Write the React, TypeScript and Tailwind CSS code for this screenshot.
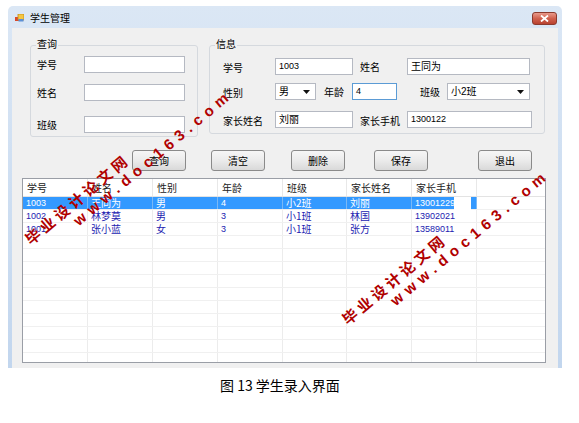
import React from "react";

const cjk = "font-['Noto_Sans_CJK_SC',sans-serif]";
const num = "font-['Liberation_Sans','Noto_Sans_CJK_SC',sans-serif]";

function TextBox({ className, value, focus }: { className: string; value?: string; focus?: boolean }) {
  const digits = value !== undefined && /^\d+$/.test(value);
  return (
    <div
      className={`${className} h-[17px] bg-white border ${
        focus ? "border-[#5b9bd5]" : "border-[#b5b9c2]"
      } flex items-center pl-[3px] ${digits ? "text-[9px]" : "text-[10px]"} leading-none text-black ${num}`}
    >
      {value}
    </div>
  );
}

function Combo({ className, value }: { className: string; value: string }) {
  return (
    <div className={`${className} h-[17px] bg-white border border-[#b5b9c2] flex items-center pl-[3px] pr-[5px] text-[10px] leading-none ${num}`}>
      <span className="flex-1">{value}</span>
      <svg width="7" height="4" viewBox="0 0 7 4">
        <path d="M0 0h7L3.5 4z" fill="#111" />
      </svg>
    </div>
  );
}

function Label({ className, children }: { className: string; children: React.ReactNode }) {
  return <span className={`${className} text-[10px] leading-none text-black ${cjk}`}>{children}</span>;
}

function Btn({ className, children }: { className: string; children: React.ReactNode }) {
  return (
    <div
      className={`${className} w-[54px] h-[21px] rounded-[3px] border border-[#8a8a8a] bg-gradient-to-b from-[#f6f6f6] via-[#ebebeb] to-[#d9d9d9] flex items-center justify-center text-[10px] leading-none ${cjk}`}
    >
      {children}
    </div>
  );
}

const cols = ["w-[65px]", "w-[65px]", "w-[65px]", "w-[65px]", "w-[64px]", "w-[65px]", "w-[65px]"];
const header = ["学号", "姓名", "性别", "年龄", "班级", "家长姓名", "家长手机"];
const rows = [
  ["1003", "王同为", "男", "4", "小2班", "刘丽", "13001229"],
  ["1002", "林梦莫", "男", "3", "小1班", "林国", "13902021"],
  ["1001", "张小蓝", "女", "3", "小1班", "张方", "13589011"],
];

function Watermark({ className }: { className: string }) {
  return (
    <div className={`absolute ${className} origin-top-left rotate-[-40deg] pointer-events-none text-[#b00000] font-bold`}>
      <div className={`h-[16px] leading-[16px] text-[15px] tracking-[3.7px] whitespace-nowrap ${cjk}`}>毕业设计论文网</div>
      <div className={`ml-[49px] mt-[1px] h-[16px] leading-[16px] text-[15px] tracking-[5.5px] whitespace-nowrap font-['Liberation_Sans',sans-serif]`}>
        www.doc163.com
      </div>
    </div>
  );
}

export default function App() {
  return (
    <div className="w-[579px] h-[423px] bg-white relative overflow-hidden">
      {/* Window */}
      <div className="ml-[8px] mt-[6px] w-[554px] h-[362px] flex flex-col bg-gradient-to-b from-[#dbe7f5] to-[#c2d6ee] rounded-t-[5px]">
        {/* Title bar */}
        <div className="h-[22px] flex items-start pt-[6px] pl-[7px] pr-[5px]">
          <svg width="9" height="8" viewBox="0 0 9 8" className="mt-[2px]">
            <rect x="0" y="3" width="4" height="4" fill="#d9482c" />
            <rect x="3" y="0" width="6" height="6" fill="#f5c642" stroke="#c48a17" strokeWidth="0.8" />
            <rect x="3.5" y="5" width="5" height="2.5" fill="#5b8fd6" />
          </svg>
          <span className={`ml-[6px] text-[10px] leading-[12px] text-black ${cjk}`}>学生管理</span>
          <div className="ml-auto w-[25px] h-[13px] rounded-[3px] border border-[#8b3a2e] bg-gradient-to-b from-[#e89a8c] via-[#d0614f] to-[#b8412f] flex items-center justify-center">
            <svg width="9" height="7" viewBox="0 0 9 7">
              <path d="M1 0.5l7 6M8 0.5l-7 6" stroke="#fff" strokeWidth="1.8" />
            </svg>
          </div>
        </div>

        {/* Client area */}
        <div className="flex-1 ml-[4px] mr-[4px] bg-[#f0f0f0] flex flex-col">
          <div className="mt-[17px] flex items-start">
            {/* 查询 group */}
            <div className="relative ml-[18px] w-[168px] h-[92px] border border-[#d5d9de] rounded-[3px] pl-[6px]">
              <span className={`absolute left-[5px] top-[-8px] px-[1px] bg-[#f0f0f0] text-[10px] leading-[12px] ${cjk}`}>查询</span>
              <div className="mt-[10px] flex items-center">
                <Label className="w-[47px]">学号</Label>
                <TextBox className="w-[101px]" />
              </div>
              <div className="mt-[11px] flex items-center">
                <Label className="w-[47px]">姓名</Label>
                <TextBox className="w-[101px]" />
              </div>
              <div className="mt-[15px] flex items-center">
                <Label className="w-[47px]">班级</Label>
                <TextBox className="w-[101px]" />
              </div>
            </div>

            {/* 信息 group */}
            <div className="relative ml-[11px] w-[336px] h-[89px] border border-[#d5d9de] rounded-[3px] pl-[13px]">
              <span className={`absolute left-[5px] top-[-8px] px-[1px] bg-[#f0f0f0] text-[10px] leading-[12px] ${cjk}`}>信息</span>
              <div className="mt-[12px] flex items-center">
                <Label className="w-[52px] mt-[2px]">学号</Label>
                <TextBox className="w-[78px]" value="1003" />
                <Label className="ml-[7px] w-[47px]">姓名</Label>
                <TextBox className="w-[123px]" value="王同为" />
              </div>
              <div className="mt-[8px] flex items-center">
                <Label className="w-[52px] mt-[2px]">性别</Label>
                <Combo className="w-[41px]" value="男" />
                <Label className="ml-[8px] w-[28px]">年龄</Label>
                <TextBox className="w-[45px]" value="4" focus />
                <Label className="ml-[23px] w-[27px]">班级</Label>
                <Combo className="w-[83px]" value="小2班" />
              </div>
              <div className="mt-[11px] flex items-center">
                <Label className="w-[52px] mt-[3px]">家长姓名</Label>
                <TextBox className="w-[78px]" value="刘丽" />
                <Label className="ml-[7px] w-[47px] mt-[3px]">家长手机</Label>
                <TextBox className="w-[125px]" value="1300122" />
              </div>
            </div>
          </div>

          {/* Buttons */}
          <div className="mt-[13px] flex">
            <Btn className="ml-[120px]">查询</Btn>
            <Btn className="ml-[25px]">清空</Btn>
            <Btn className="ml-[26px]">删除</Btn>
            <Btn className="ml-[29px]">保存</Btn>
            <Btn className="ml-[50px]">退出</Btn>
          </div>

          {/* Data grid */}
          <div className="mt-[7px] ml-[10px] w-[524px] h-[185px] border border-[#9a9ea6] bg-white overflow-hidden flex flex-col">
            <div className="h-[18px] shrink-0 flex border-b border-[#e3e3e3]">
              {header.map((h, i) => (
                <div key={h} className={`${cols[i]} shrink-0 border-r border-[#e8e8e8] flex items-center pl-[4px] text-[10px] leading-none text-[#222] ${cjk}`}>
                  {h}
                </div>
              ))}
              <div className="flex-1" />
            </div>
            {rows.map((r, ri) => (
              <div key={ri} className="h-[13px] shrink-0 flex border-b border-[#f0f0f0]">
                {r.map((c, i) => (
                  <div
                    key={i}
                    className={`${cols[i]} shrink-0 relative border-r ${
                      ri === 0 ? "bg-[#3399ff] text-white border-[#7ab8f5]" : "text-[#2222b0] border-[#ececec]"
                    } flex items-center pl-[3px] leading-none ${
                      /^\d+$/.test(c) ? `text-[9px] ${num}` : `text-[10px] ${cjk}`
                    }`}
                  >
                    {c}
                    {ri === 0 && i === 6 && <div className="absolute right-[5px] top-0 w-[17px] h-[13px] bg-white" />}
                  </div>
                ))}
                <div className="flex-1" />
              </div>
            ))}
            {Array.from({ length: 10 }).map((_, ri) => (
              <div key={`e${ri}`} className="h-[13px] shrink-0 flex border-b border-[#f0f0f0]">
                {cols.map((w, i) => (
                  <div key={i} className={`${w} shrink-0 border-r border-[#ececec]`} />
                ))}
                <div className="flex-1" />
              </div>
            ))}
          </div>
        </div>
      </div>

      {/* Caption */}
      <div className={`mt-[9px] ml-[220px] text-[14px] leading-[16px] text-black ${cjk}`}>图 13 学生录入界面</div>

      <Watermark className="left-[22px] top-[235px]" />
      <Watermark className="left-[339px] top-[315px]" />
    </div>
  );
}
